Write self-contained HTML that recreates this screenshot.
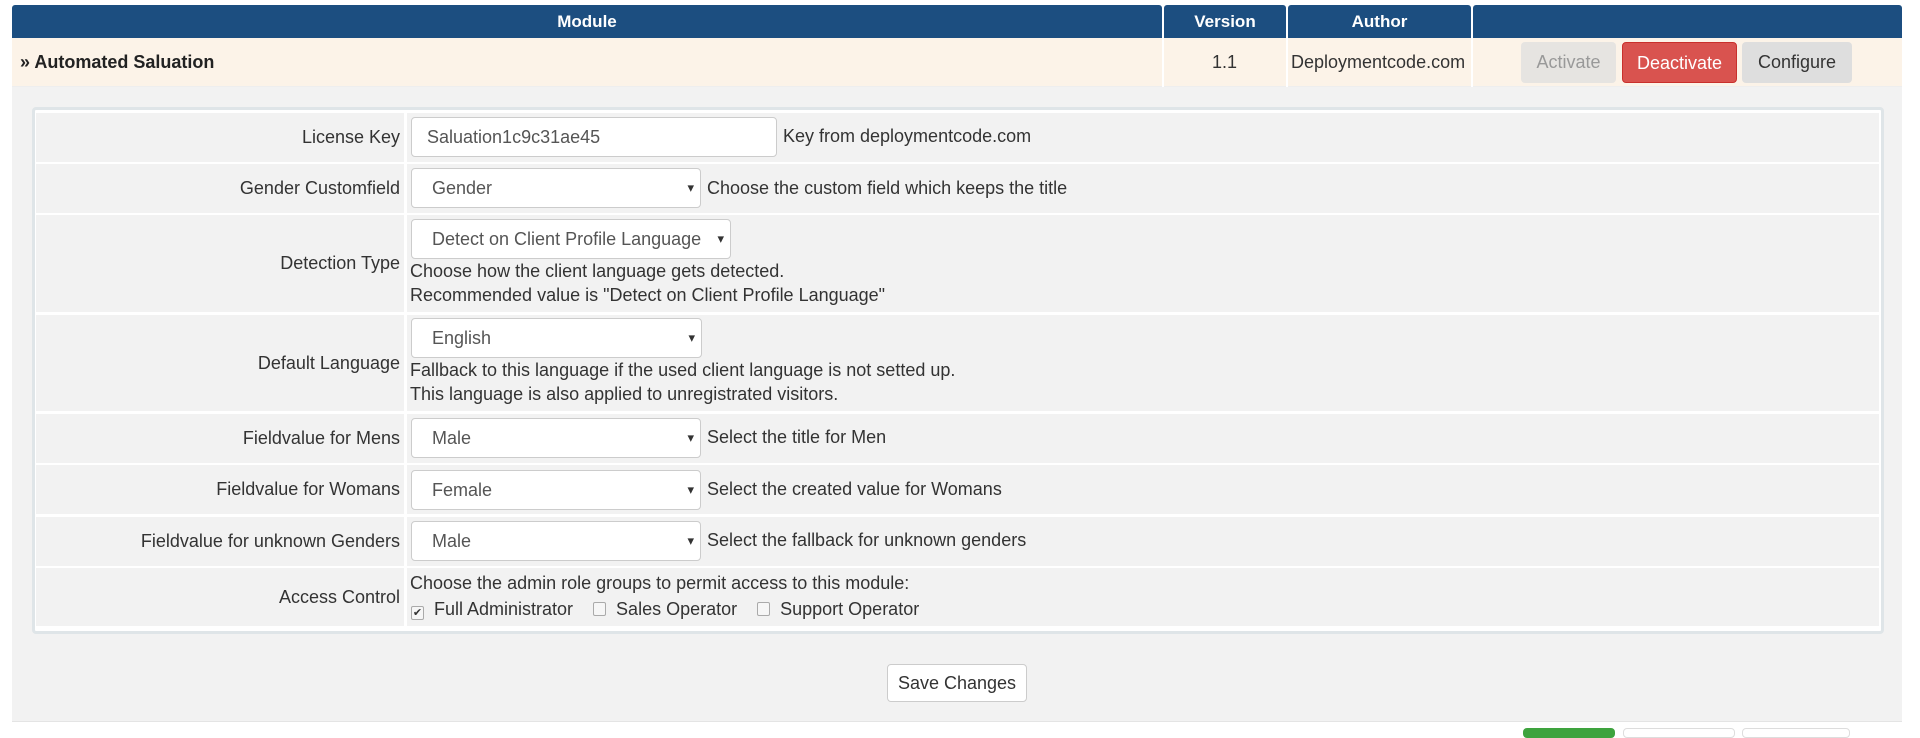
<!DOCTYPE html>
<html><head><meta charset="utf-8"><style>
*{box-sizing:border-box;margin:0;padding:0}
body{width:1920px;height:731px;background:#fff;font-family:"Liberation Sans",sans-serif;font-size:18px;color:#333;position:relative;overflow:hidden}
.a{position:absolute}
.h{background:#1c4e80;color:#fff;font-weight:bold;text-align:center;line-height:33px;height:33px;top:5px;border-radius:3px 3px 0 0;font-size:17px}
.btn{position:absolute;top:42px;height:41px;line-height:41px;text-align:center;border-radius:4px;font-size:18px}
.lab{position:absolute;left:36px;width:368px;background:#f2f2f2;text-align:right;padding-right:4px;display:flex;align-items:center;justify-content:flex-end}
.fld{position:absolute;left:407px;width:1472px;background:#f2f2f2}
.in{position:absolute;left:411px;background:#fff;border:1px solid #ccc;border-radius:4px;height:40px;line-height:38px;padding-left:20px;color:#555}
.sel::after{content:"▾";position:absolute;right:6px;top:0;font-size:13px;color:#333}
.t{position:absolute;white-space:nowrap}
.cb{display:inline-block;width:13px;height:14px;border:1px solid #aaa;border-radius:2px;background:#f6f6f6;vertical-align:-1px;margin-right:10px;font-size:11px;line-height:12px;text-align:center}
</style></head><body>
<div class="a h" style="left:12px;width:1150px">Module</div>
<div class="a h" style="left:1164px;width:122px">Version</div>
<div class="a h" style="left:1288px;width:183px">Author</div>
<div class="a h" style="left:1473px;width:429px"></div>
<div class="a" style="left:12px;top:38px;width:1890px;height:49px;background:#fcf3e8;border-bottom:1px solid #eee"></div>
<div class="a" style="left:1162px;top:38px;width:2px;height:49px;background:#fff"></div>
<div class="a" style="left:1286px;top:38px;width:2px;height:49px;background:#fff"></div>
<div class="a" style="left:1471px;top:38px;width:2px;height:49px;background:#fff"></div>
<div class="t" style="left:20px;top:52px;font-weight:bold;color:#222">» Automated Saluation</div>
<div class="t" style="left:1212px;top:52px;color:#333">1.1</div>
<div class="t" style="left:1291px;top:52px;color:#333">Deploymentcode.com</div>
<div class="btn" style="left:1521px;width:95px;background:#e6e4e1;color:#999">Activate</div>
<div class="btn" style="left:1622px;width:115px;background:#d9534f;color:#fff;border:1px solid #c9302c">Deactivate</div>
<div class="btn" style="left:1742px;width:110px;background:#dedede;color:#333">Configure</div>

<div class="a" style="left:12px;top:87px;width:1890px;height:635px;background:#f2f2f2;border-bottom:1px solid #e4e4e4"></div>
<div class="a" style="left:32px;top:107px;width:1852px;height:527px;border:3px solid #dfe5e8;border-radius:4px;background:#fff"></div>

<div class="lab" style="top:113px;height:49px">License Key</div><div class="fld" style="top:113px;height:49px"></div>
<div class="lab" style="top:164px;height:49px">Gender Customfield</div><div class="fld" style="top:164px;height:49px"></div>
<div class="lab" style="top:215px;height:97px">Detection Type</div><div class="fld" style="top:215px;height:97px"></div>
<div class="lab" style="top:315px;height:96px">Default Language</div><div class="fld" style="top:315px;height:96px"></div>
<div class="lab" style="top:414px;height:49px">Fieldvalue for Mens</div><div class="fld" style="top:414px;height:49px"></div>
<div class="lab" style="top:465px;height:49px">Fieldvalue for Womans</div><div class="fld" style="top:465px;height:49px"></div>
<div class="lab" style="top:517px;height:49px">Fieldvalue for unknown Genders</div><div class="fld" style="top:517px;height:49px"></div>
<div class="lab" style="top:568px;height:58px">Access Control</div><div class="fld" style="top:568px;height:58px"></div>

<div class="in" style="top:117px;width:366px;padding-left:15px">Saluation1c9c31ae45</div>
<div class="t" style="left:783px;top:126px">Key from deploymentcode.com</div>
<div class="in sel" style="top:168px;width:290px">Gender</div>
<div class="t" style="left:707px;top:178px">Choose the custom field which keeps the title</div>
<div class="in sel" style="top:219px;width:320px">Detect on Client Profile Language</div>
<div class="t" style="left:410px;top:261px">Choose how the client language gets detected.</div>
<div class="t" style="left:410px;top:285px">Recommended value is "Detect on Client Profile Language"</div>
<div class="in sel" style="top:318px;width:291px">English</div>
<div class="t" style="left:410px;top:360px">Fallback to this language if the used client language is not setted up.</div>
<div class="t" style="left:410px;top:384px">This language is also applied to unregistrated visitors.</div>
<div class="in sel" style="top:418px;width:290px">Male</div>
<div class="t" style="left:707px;top:427px">Select the title for Men</div>
<div class="in sel" style="top:470px;width:290px">Female</div>
<div class="t" style="left:707px;top:479px">Select the created value for Womans</div>
<div class="in sel" style="top:521px;width:290px">Male</div>
<div class="t" style="left:707px;top:530px">Select the fallback for unknown genders</div>
<div class="t" style="left:410px;top:573px">Choose the admin role groups to permit access to this module:</div>
<div class="t" style="left:411px;top:599px"><span class="cb">✔</span>Full Administrator&nbsp;&nbsp;&nbsp;&nbsp;<span class="cb"></span>Sales Operator&nbsp;&nbsp;&nbsp;&nbsp;<span class="cb"></span>Support Operator</div>

<div class="a" style="left:887px;top:664px;width:140px;height:38px;line-height:36px;text-align:center;background:#fff;border:1px solid #ccc;border-radius:4px;color:#333">Save Changes</div>
<div class="a" style="left:1523px;top:728px;width:92px;height:10px;background:#3ea33e;border-radius:4px"></div>
<div class="a" style="left:1623px;top:728px;width:112px;height:10px;border:1px solid #ddd;border-radius:4px"></div>
<div class="a" style="left:1742px;top:728px;width:108px;height:10px;border:1px solid #ddd;border-radius:4px"></div>
</body></html>
